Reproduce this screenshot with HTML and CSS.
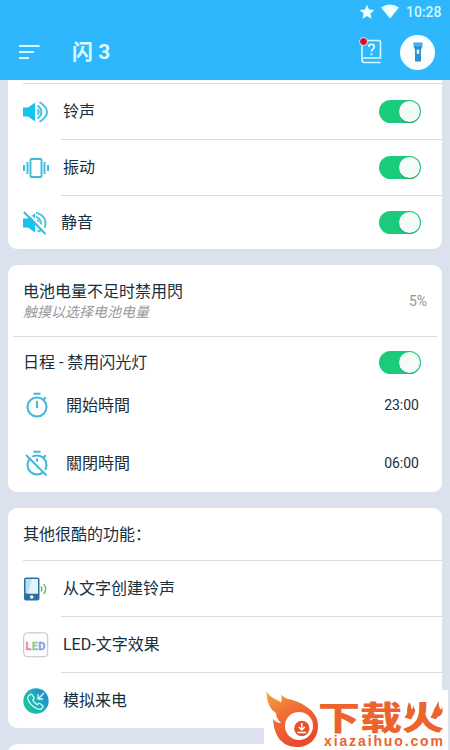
FILE: index.html
```html
<!DOCTYPE html>
<html lang="zh-CN">
<head>
<meta charset="utf-8">
<meta name="viewport" content="width=device-width">
<title>闪 3</title>
<link rel="stylesheet" href="styles.css">
</head>
<body>
<header class="header">
  <div class="status">
    <svg width="16" height="16" viewBox="0 0 16 16"><path fill="#f0ffff" d="M8 .8l2.1 4.8 5.2.5-3.9 3.5 1.1 5.2L8 12.1l-4.500 2.700 1.100-5.200L.7 6.100l5.200-.5z"/></svg>
    <svg class="wifi" width="18" height="15" viewBox="0 0 18 15"><path fill="#f0ffff" d="M0 3.500Q9-2.700 18 3.500L9 14.500z"/></svg>
    <span class="clock">10:28</span>
  </div>
  <div class="bar">
    <svg class="menu" width="21" height="16" viewBox="0 0 21 16"><path stroke="#d4fbff" stroke-width="2" d="M0 2h20.500M0 8h15M0 14h10"/></svg>
    <h1 class="title">闪 3</h1>
    <svg class="help" width="26" height="30" viewBox="0 0 26 30">
      <path fill="none" stroke="#d5fbff" stroke-width="1.600" d="M23.500 22.500V6.500q0-2-2-2H7.500q-2.500 0-2.500 2.500v17q0 2.500 2.500 2.500h16M5 24q0-2 2.500-2h16"/>
      <path fill="none" stroke="#d5fbff" stroke-width="1.800" d="M11.700 11q0-2.700 2.800-2.700t2.800 2.500q0 1.300-1.400 2.300t-1.400 2.600M14.500 17.300v2"/>
      <circle cx="6.500" cy="5.500" r="4" fill="#c9142c" stroke="#d9edff"/>
    </svg>
    <div class="torch">
      <svg width="12" height="22" viewBox="0 0 12 22"><path fill="#46abe2" d="M1.500 1.500h9v3h-9z"/><path fill="#2e90cf" d="M1.500 4.500h9L9 9v11.500H3V9z"/><rect x="4.700" y="8.500" width="2.600" height="4.500" rx="1" fill="#d8f6ff"/></svg>
    </div>
  </div>
</header>
<main>
  <section class="card card-modes">
    <div class="cut"></div>
    <div class="row">
      <svg class="icon" viewBox="0 0 26 26"><path fill="#16c3ee" d="M0 8.500h5L12 3.500v19l-7-5H0z"/><g fill="none" stroke="#45c4e0" stroke-width="2"><path d="M14.500 10.500q2.500 2.500 0 5M14.500 6.500q8 6.500 0 13M16.500 3q15 10 0 20"/></g></svg>
      <span class="label">铃声</span><span class="switch"></span>
    </div>
    <div class="row">
      <svg class="icon" viewBox="0 0 26 26"><g fill="none" stroke="#3bbddb" stroke-width="1.900"><rect x="7.500" y="4" width="11" height="18" rx="1"/><path d="M4.500 7v12M1 10v6M21.500 7v12M25 10v6"/></g></svg>
      <span class="label">振动</span><span class="switch"></span>
    </div>
    <div class="row mute">
      <svg class="icon" viewBox="0 0 26 26"><path fill="#16c3ee" d="M0 8.500h5L12 3.500v19l-7-5H0z"/><g fill="none" stroke="#45c4e0" stroke-width="1.900"><path d="M14 10q2.500 2.500 1 5M13 6.500q6.500 3.500 4.500 9.500M13 2.700q12.500 4 8.600 15.300M14.500 21.500l4-1.500"/></g><path stroke="#fff" stroke-width="2" d="M2.500.8L25 22.800"/><path stroke="#38b9dc" stroke-width="2" d="M.8 2L22.500 24"/></svg>
      <span class="label">静音</span><span class="switch"></span>
    </div>
  </section>

  <section class="card card-battery">
    <div class="battery">
      <div><div class="label">电池电量不足时禁用閃</div><div class="hint">触摸以选择电池电量</div></div>
      <span class="percent">5%</span>
    </div>
    <div class="schedule"><span class="label">日程 - 禁用闪光灯</span><span class="switch"></span></div>
    <div class="time">
      <svg class="icon" viewBox="0 0 26 26"><g fill="none" stroke="#43b8d8" stroke-width="2.100"><circle cx="13" cy="15" r="9.500"/><path d="M9.500 1.700h7M13 9v7M19.500 7.500l2.200-2.200"/></g></svg>
      <span class="label">開始時間</span><span class="hour">23:00</span>
    </div>
    <div class="time">
      <svg class="icon" viewBox="0 0 26 26"><g fill="none" stroke="#43b8d8" stroke-width="2.100"><circle cx="13" cy="15" r="9.500"/><path d="M9.500 1.700h7M13 8.500v3.500M19.500 7.500l2.200-2.200"/></g><path stroke="#fff" stroke-width="1.800" d="M3.500 3.500L24 24"/><path stroke="#43b8d8" stroke-width="2" d="M2 5l20.500 20.500"/></svg>
      <span class="label">關閉時間</span><span class="hour">06:00</span>
    </div>
  </section>

  <section class="card card-more">
    <h2 class="heading">其他很酷的功能：</h2>
    <div class="row">
      <svg class="icon" viewBox="0 0 26 26"><rect x="1" y="1.500" width="15.500" height="23" rx="2" fill="#27729e"/><path fill="#bedfed" d="M2.500 3h12.500v14.500H2.500z"/><path fill="#e5f4fa" d="M9 3h6v14.500H5z"/><circle cx="8.700" cy="21" r="1.800" fill="#fff"/><path fill="none" stroke="#66b978" stroke-width="1.400" d="M18 10.500q2 2.500 0 5M20.700 8q4 5 0 10"/></svg>
      <span class="label">从文字创建铃声</span>
    </div>
    <div class="row">
      <svg class="icon" viewBox="0 0 26 26"><rect x=".7" y=".8" width="24" height="24" rx="3.500" fill="#fcfcff" stroke="#bebec9"/><g class="led"><text x="2.500" y="17.500" fill="#ee8794" stroke="#ee8794">L</text><text x="8.800" y="17.500" fill="#88cf91" stroke="#88cf91">E</text><text x="15.300" y="17.500" fill="#8b9bea" stroke="#8b9bea">D</text></g></svg>
      <span class="label">LED-文字效果</span>
    </div>
    <div class="row">
      <svg class="icon" viewBox="0 0 26 26"><defs><linearGradient id="call" x1="0" y1="1" x2="1" y2=".4"><stop stop-color="#16c798"/><stop offset=".55" stop-color="#1bb4b5"/><stop offset="1" stop-color="#258dcc"/></linearGradient></defs><circle cx="13" cy="13" r="12.700" fill="url(#call)"/><path fill="none" stroke="#d5fbf5" stroke-width="1.300" stroke-linejoin="round" d="M5 8.500l2.200-2q1-.8 1.800.2l2 2.800q.5 1-.4 1.700l-.9.8q1.500 3 4.500 4.700l1-1q.8-.8 1.700-.1l2.600 2q1 .8.2 1.700l-1.500 1.700q-1.500 1-4.500-.5Q7 17 5 11.500q-.7-2 0-3z"/><path fill="none" stroke="#d5fbf5" stroke-width="1.300" d="M21 5l-5.700 5.700M15 6v5h5"/></svg>
      <span class="label">模拟来电</span>
    </div>
  </section>
  <section class="card card-next"></section>
</main>
<aside class="brand">
  <svg width="184" height="60" viewBox="0 0 184 60">
    <defs><linearGradient id="fire" x1="0" y1="0" x2=".5" y2="1"><stop stop-color="#f8a33d"/><stop offset=".45" stop-color="#f07035"/><stop offset="1" stop-color="#e84a2b"/></linearGradient></defs>
    <path fill="url(#fire)" d="M2.500 1C5 7 11 8.500 17 12.500Q18.500 8 17 4C20 10 29 8.500 39 14.500C49 20 54 27 54 36C54 49 45 57 33 57C18 57 10 46 9 29Q12 33 17 33Q12 28 12 23Q3 18 2.500 1z"/>
    <circle cx="35" cy="36" r="14" fill="#fff"/><circle cx="37.800" cy="38.500" r="7.700" fill="#e85228"/>
    <path fill="none" stroke="#fff" stroke-width="1.500" d="M37.800 33v6M34.800 37l3 3 3-3M33.500 42.500h8.600"/>
    <g transform="translate(0 40) scale(1 .78)"><text class="brand-name" x="54" y="0">下载火</text></g>
    <path fill="#ec632e" d="M145 12q3 4 2 8 3-2 2-5 4 7-1 10-5 1-5-4 0-4 2-9zM175 11q-1 4 1 8 2 1 2-3 2 7-2 10-6 2-6-3 0-5 5-12z"/>
    <text class="brand-site" x="60" y="55.500" textLength="119">xiazaihuo.com</text>
  </svg>
</aside>
</body>
</html>
```
FILE: styles.css
```css
* { box-sizing: border-box; }
body {
  margin: 0;
  height: 750px;
  overflow: hidden;
  background: #dbe2ee;
  color: #172f3d;
  font-family: Roboto, "Noto Sans CJK SC", sans-serif;
}
svg { display: block; flex: none; }
.header { height: 80px; background: #2eb7fc; }
.status {
  height: 24px;
  padding-right: 8px;
  display: flex;
  align-items: center;
  justify-content: flex-end;
  color: #d5f8ff;
}
.wifi { margin: 0 7px 2px 6px; }
.clock { width: 36px; font-size: 14px; font-weight: 500; white-space: nowrap; }
.bar { height: 56px; padding: 0 15px 0 19px; display: flex; align-items: center; }
.title { flex: 1; margin: 0 0 0 32px; font-size: 21px; line-height: 30px; font-weight: 700; color: #d9fbff; }
.help { margin: 0 17px 2px 0; }
.torch {
  width: 35px;
  height: 35px;
  border-radius: 50%;
  background: #fafeff;
  display: flex;
  align-items: center;
  justify-content: center;
}
.card { margin: 0 8px 16px; background: #fff; border-radius: 9px; overflow: hidden; }
.card-modes { height: 169px; border-radius: 0 0 9px 9px; }
.cut { height: 4px; margin-left: 15px; border-bottom: 1px solid #cfdde5; }
.row {
  height: 56px;
  padding: 0 21px 1px 15px;
  display: flex;
  align-items: center;
  background: linear-gradient(#d3dee4, #d3dee4) 53px 100% / 100% 1px no-repeat;
}
.row:last-child { height: 55px; padding-bottom: 0; background: none; }
.card-modes .row:last-child { height: 53px; }
.icon { width: 26px; height: 26px; }
.label { font-size: 16px; line-height: 22px; white-space: nowrap; }
.row .label { flex: 1; margin-left: 14px; padding-top: 1px; }
.mute .label { margin-left: 12px; }
.switch {
  width: 42px;
  height: 23px;
  padding: 1px;
  border-radius: 12px;
  background: #1acb7b;
  display: flex;
  justify-content: flex-end;
}
.switch::after {
  content: "";
  width: 21px;
  height: 21px;
  border-radius: 50%;
  background: #f5fbf8;
  box-shadow: 0 1px 1px #33816499;
}
.card-battery { height: 227px; }
.battery {
  height: 72px;
  margin: 0 5px;
  padding: 0 10px;
  display: flex;
  align-items: center;
  justify-content: space-between;
  border-bottom: 1px solid #d3dfe3;
}
.hint { font-size: 14px; line-height: 18px; font-style: italic; color: #999; }
.percent { font-size: 14px; color: #929292; }
.schedule {
  height: 39px;
  padding: 12px 21px 0 15px;
  display: flex;
  align-items: center;
  justify-content: space-between;
}
.time { height: 58px; padding: 0 23px 0 16px; display: flex; align-items: center; }
.time .label { flex: 1; margin-left: 16px; padding-top: 2px; }
.hour { font-size: 14px; }
.card-more { height: 220px; }
.heading {
  height: 53px;
  margin: 0 0 0 15px;
  font-size: 16px;
  line-height: 54px;
  font-weight: 400;
  border-bottom: 1px solid #d3dfe3;
}
.led text { font: 700 11px Roboto, sans-serif; stroke-width: .3px; }
.card-next { height: 40px; margin-bottom: 0; }
.brand { position: absolute; left: 264px; top: 690px; background: #fff; }
.brand-name { font: 900 42px "Noto Sans CJK SC", sans-serif; fill: #ec632e; }
.brand-site { font: 700 14px "Liberation Sans", sans-serif; fill: #ec632e; }
```
